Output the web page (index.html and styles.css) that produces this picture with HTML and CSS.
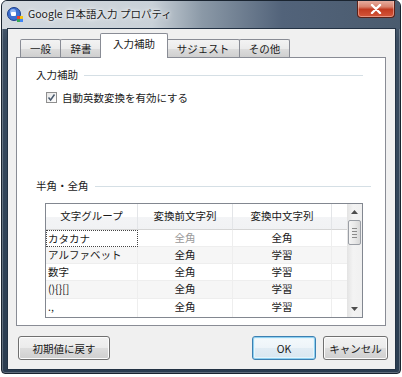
FILE: index.html
```html
<!DOCTYPE html>
<html lang="ja">
<head>
    <meta charset="UTF-8">
    <title>Google 日本語入力 プロパティ</title>
    <link rel="stylesheet" href="styles.css">
</head>
<body>
    <div class="window">
        <div class="titlebar">
            <svg class="app-icon" width="16" height="15" viewBox="0 0 16 15">
                <circle cx="7" cy="7" r="6.5" fill="#3c6fd0" stroke="#1d3f8a" stroke-width="1"/>
                <circle cx="6" cy="5" r="3" fill="#8fb4f2"/>
                <rect x="4" y="5" width="5" height="4" rx="1" fill="#ffffff"/>
                <rect x="10" y="9" width="3" height="3" fill="#e8412f"/>
                <rect x="13" y="9" width="3" height="3" fill="#f4c20d"/>
                <rect x="10" y="12" width="3" height="3" fill="#34a853"/>
                <rect x="13" y="12" width="3" height="3" fill="#4285f4"/>
            </svg>
            <span class="title">Google 日本語入力 プロパティ</span>
            <div class="close-btn">
                <svg width="12" height="10" viewBox="0 0 12 10">
                    <path d="M2 1 L10 9 M10 1 L2 9" stroke="#ffffff" stroke-width="2.4" stroke-linecap="round"/>
                </svg>
            </div>
        </div>

        <div class="client">
            <div class="tabs">
                <div class="tab tab-general">一般</div>
                <div class="tab tab-dict">辞書</div>
                <div class="tab tab-active">入力補助</div>
                <div class="tab tab-suggest">サジェスト</div>
                <div class="tab tab-other">その他</div>
            </div>

            <div class="panel">
                <div class="group-title group-first">
                    <span>入力補助</span>
                    <div class="group-line"></div>
                </div>
                <label class="check-row">
                    <span class="checkbox">
                        <svg width="9" height="9" viewBox="0 0 9 9">
                            <path d="M1.5 4.5 L3.6 7 L7.5 1.5" fill="none" stroke="#4a5a6e" stroke-width="1.5"/>
                        </svg>
                    </span>
                    <span>自動英数変換を有効にする</span>
                </label>

                <div class="group-title group-second">
                    <span>半角・全角</span>
                    <div class="group-line"></div>
                </div>

                <div class="list">
                    <div class="list-grid">
                        <div class="head">文字グループ</div>
                        <div class="head">変換前文字列</div>
                        <div class="head">変換中文字列</div>
                        <div class="head head-filler"></div>

                        <div class="cell name focus">カタカナ</div>
                        <div class="cell disabled">全角</div>
                        <div class="cell">全角</div>
                        <div class="cell filler"></div>

                        <div class="cell name alt">アルファベット</div>
                        <div class="cell alt">全角</div>
                        <div class="cell alt">学習</div>
                        <div class="cell filler alt"></div>

                        <div class="cell name">数字</div>
                        <div class="cell">全角</div>
                        <div class="cell">学習</div>
                        <div class="cell filler"></div>

                        <div class="cell name alt">(){}[]</div>
                        <div class="cell alt">全角</div>
                        <div class="cell alt">学習</div>
                        <div class="cell filler alt"></div>

                        <div class="cell name last">.,</div>
                        <div class="cell last">全角</div>
                        <div class="cell last">学習</div>
                        <div class="cell filler last"></div>
                    </div>
                    <div class="scrollbar">
                        <div class="sb-btn">
                            <svg width="7" height="4" viewBox="0 0 7 4"><polygon points="0,4 3.5,0 7,4" fill="#4d4d4d"/></svg>
                        </div>
                        <div class="sb-thumb">
                            <span></span><span></span><span></span><span></span>
                        </div>
                        <div class="sb-track"></div>
                        <div class="sb-btn">
                            <svg width="7" height="4" viewBox="0 0 7 4"><polygon points="0,0 7,0 3.5,4" fill="#4d4d4d"/></svg>
                        </div>
                    </div>
                </div>
            </div>

            <div class="buttons">
                <button class="btn btn-reset">初期値に戻す</button>
                <div class="spacer"></div>
                <button class="btn btn-ok">OK</button>
                <button class="btn btn-cancel">キャンセル</button>
            </div>
        </div>
    </div>
</body>
</html>
```

FILE: styles.css
```css
body, html {
    margin: 0;
    padding: 0;
    background: #ffffff;
}

body {
    font-family: "Noto Sans CJK JP", "Noto Sans", sans-serif;
    font-size: 10.5px;
    color: #1a1a1a;
}

.window {
    box-sizing: border-box;
    width: 400px;
    height: 374px;
    margin-left: 1px;
    border: 1px solid #1a2430;
    border-radius: 6px 6px 4px 4px;
    background: linear-gradient(to bottom, #56677a 0, #3a4c60 40px, #314458 60%, #2a3c50 100%);
    box-shadow: inset 0 0 0 1px rgba(255, 255, 255, 0.25);
    overflow: hidden;
}

.titlebar {
    display: flex;
    align-items: flex-start;
    height: 28px;
    background: linear-gradient(to right, #d3d9df 0, #c9d1d8 150px, #8b99a7 200px, #52637a 280px, #4a5b6e 100%);
}

.app-icon {
    margin: 6px 0 0 5px;
}

.title {
    margin: 5px 0 0 5px;
    line-height: 16px;
    font-size: 10.5px;
    color: #1b1b1b;
    text-shadow: 0 0 6px #ffffff, 0 0 3px #ffffff;
}

.close-btn {
    display: flex;
    align-items: center;
    justify-content: center;
    box-sizing: border-box;
    width: 38px;
    height: 18px;
    margin: -1px 5px 0 auto;
    border: 1px solid #5a2118;
    border-top: 0;
    border-radius: 0 0 4px 4px;
    background: linear-gradient(to bottom, #e8b3a6 0, #d8826d 40%, #c23b21 55%, #d4563b 100%);
    box-shadow: inset 0 0 0 1px rgba(255, 220, 210, 0.45);
}

.client {
    box-sizing: border-box;
    height: 340px;
    margin: 0 5px 0 6px;
    background: #f0f0f0;
    box-shadow: 0 0 0 1px #233244;
}

/* tabs */
.tabs {
    display: flex;
    align-items: flex-end;
    height: 28px;
    padding-left: 12px;
}

.tab {
    box-sizing: border-box;
    height: 18px;
    margin-right: -1px;
    border: 1px solid #898c95;
    border-bottom: 0;
    border-radius: 2px 2px 0 0;
    background: linear-gradient(to bottom, #f3f3f3 0, #ebebeb 50%, #dddddd 51%, #cfcfcf 100%);
    text-align: center;
    line-height: 17px;
}

.tab-general { width: 41px; }
.tab-dict { width: 42px; }
.tab-suggest { width: 74px; }
.tab-other { width: 51px; }

.tab-active {
    position: relative;
    z-index: 1;
    width: 68px;
    height: 25px;
    margin: 0 -2px -1px -1px;
    background: #ffffff;
    line-height: 19px;
}

/* panel */
.panel {
    box-sizing: border-box;
    width: 370px;
    height: 269px;
    margin-left: 8px;
    padding-top: 10px;
    border: 1px solid #898c95;
    background: #ffffff;
}

.group-title {
    display: flex;
    align-items: center;
    height: 14px;
    margin-left: 19px;
    line-height: 14px;
}

.group-first {
    margin-right: 22px;
}

.group-second {
    margin-top: 75px;
    margin-right: 14px;
}

.group-line {
    flex: 1;
    height: 1px;
    margin-left: 6px;
    background: #d5dfe5;
}

.check-row {
    display: flex;
    align-items: center;
    height: 14px;
    margin: 8px 0 0 29px;
}

.checkbox {
    display: flex;
    align-items: center;
    justify-content: center;
    box-sizing: border-box;
    width: 11px;
    height: 11px;
    margin-right: 5px;
    border: 1px solid #8f8f8f;
    background: linear-gradient(135deg, #e6e6e6 0, #ffffff 100%);
}

/* list view */
.list {
    display: flex;
    box-sizing: border-box;
    width: 318px;
    height: 115px;
    margin: 10px 0 0 28px;
    border: 1px solid #828790;
    background: #ffffff;
}

.list-grid {
    display: grid;
    grid-template-columns: 92px 95px 99px 15px;
    grid-template-rows: 26px 17px 17px 17px 18px 18px;
    overflow: hidden;
}

.head {
    box-sizing: border-box;
    border-right: 1px solid #e3e5e8;
    border-bottom: 1px solid #d5d5d5;
    background: linear-gradient(to bottom, #ffffff 0, #ffffff 50%, #f3f4f6 51%, #f1f2f4 100%);
    text-align: center;
    line-height: 24px;
    font-size: 10.5px;
}

.head-filler {
    border-right: 0;
}

.cell {
    box-sizing: border-box;
    border-right: 1px solid #eeeeee;
    border-bottom: 1px solid #eeeeee;
    text-align: center;
    line-height: 16px;
}

.cell.alt {
    background: #f6f6f6;
}

.cell.name {
    padding-left: 2px;
    text-align: left;
}

.cell.focus {
    border: 1px dotted #444444;
    line-height: 15px;
    padding-left: 1px;
}

.cell.disabled {
    color: #9a9a9a;
}

.cell.filler {
    border-right: 0;
}

.cell.last {
    border-bottom: 0;
}

.scrollbar {
    display: flex;
    flex-direction: column;
    width: 15px;
    background: linear-gradient(to right, #e3e3e3 0, #f3f3f3 40%, #f0f0f0 100%);
}

.sb-btn {
    display: flex;
    align-items: center;
    justify-content: center;
    height: 16px;
}

.sb-thumb {
    display: flex;
    flex-direction: column;
    align-items: center;
    justify-content: center;
    gap: 2px;
    box-sizing: border-box;
    height: 25px;
    margin: 0 1px;
    border: 1px solid #9a9ea5;
    border-radius: 2px;
    background: linear-gradient(to right, #f4f4f4 0, #e9e9e9 50%, #d8d8d8 100%);
}

.sb-thumb span {
    width: 5px;
    height: 1px;
    background: #8a8a8a;
}

.sb-track {
    flex: 1;
}

/* dialog buttons */
.buttons {
    display: flex;
    height: 24px;
    margin-top: 10px;
    padding: 0 7px 0 10px;
}

.spacer {
    flex: 1;
}

.btn {
    box-sizing: border-box;
    height: 24px;
    border: 1px solid #707070;
    border-radius: 3px;
    background: linear-gradient(to bottom, #f2f2f2 0, #ebebeb 50%, #dddddd 51%, #cfcfcf 100%);
    box-shadow: inset 0 0 0 1px #fcfcfc;
    font-family: "Noto Sans CJK JP", "Noto Sans", sans-serif;
    font-size: 10.5px;
    color: #1a1a1a;
    padding: 0;
}

.btn-reset {
    width: 92px;
}

.btn-ok {
    width: 64px;
    border-color: #3c7fb1;
    background: linear-gradient(to bottom, #f4f9fc 0, #edf4f9 50%, #e1ecf4 51%, #d8e6f0 100%);
    box-shadow: inset 0 0 0 1px #8ed0f0, inset 0 0 0 2px #e6f4fb;
}

.btn-cancel {
    width: 65px;
    margin-left: 7px;
}
```
